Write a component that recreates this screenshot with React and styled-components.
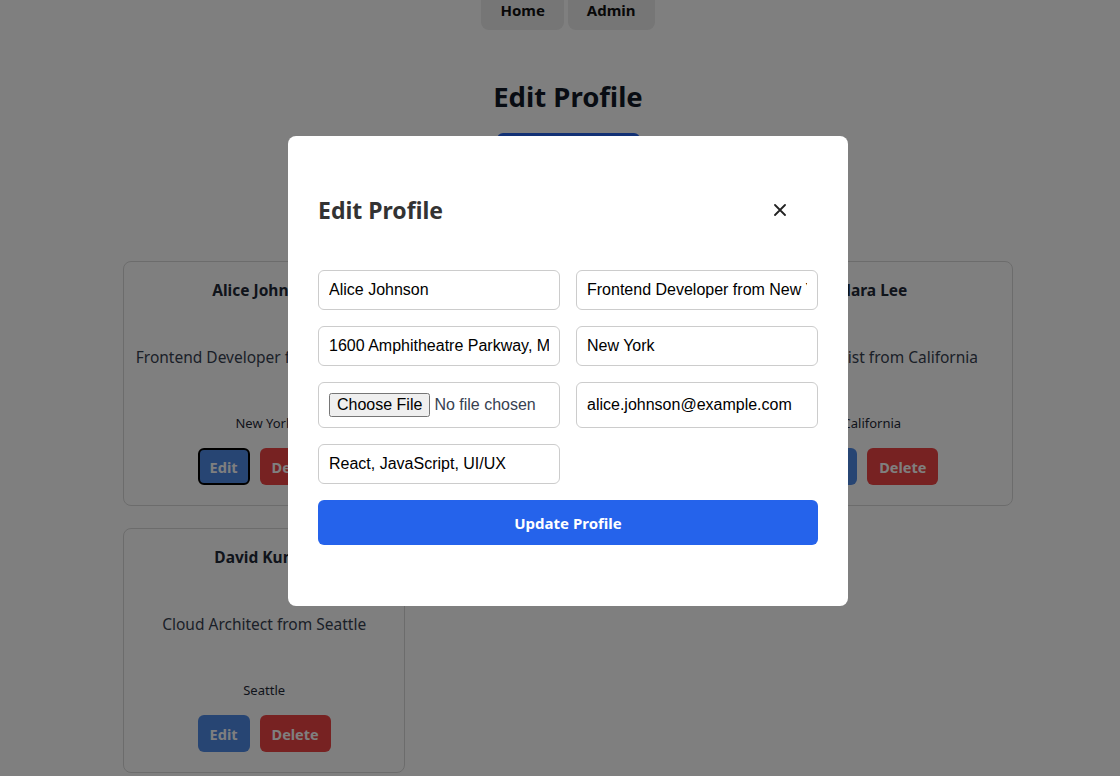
import React from "react";
import styled, { createGlobalStyle } from "styled-components";

const GlobalStyle = createGlobalStyle`
  * {
    box-sizing: border-box;
  }
  body {
    margin: 0;
    background: #ffffff;
    font-family: "Noto Sans", "Open Sans", sans-serif;
    color: #1f2937;
  }
`;

const profiles = [
  {
    name: "Alice Johnson",
    about: "Frontend Developer from New York",
    location: "New York",
    focused: true,
  },
  {
    name: "Bob Smith",
    about: "Backend Engineer from Texas",
    location: "Texas",
  },
  {
    name: "Clara Lee",
    about: "Data Scientist from California",
    location: "California",
  },
  {
    name: "David Kumar",
    about: "Cloud Architect from Seattle",
    location: "Seattle",
  },
];

function App() {
  return (
    <>
      <GlobalStyle />
      <Page>
        <Nav>
          <NavButton>Home</NavButton>
          <NavButton>Admin</NavButton>
        </Nav>
        <Title>Edit Profile</Title>
        <AddButton>Add Profile</AddButton>
        <CardGrid>
          {profiles.map((p) => (
            <Card key={p.name}>
              <Name>{p.name}</Name>
              <About>{p.about}</About>
              <Location>{p.location}</Location>
              <Actions>
                <ActionButton $kind="edit" $focused={p.focused}>
                  Edit
                </ActionButton>
                <ActionButton $kind="delete">Delete</ActionButton>
              </Actions>
            </Card>
          ))}
        </CardGrid>
      </Page>

      <Overlay>
        <Modal>
          <ModalHeader>
            <ModalTitle>Edit Profile</ModalTitle>
            <CloseButton aria-label="Close">
              <svg width="12" height="12" viewBox="0 0 12 12">
                <path
                  d="M1 1 L11 11 M11 1 L1 11"
                  stroke="#222"
                  strokeWidth="1.8"
                  strokeLinecap="round"
                />
              </svg>
            </CloseButton>
          </ModalHeader>
          <Form>
            <Input defaultValue="Alice Johnson" />
            <Input defaultValue="Frontend Developer from New York" />
            <Input defaultValue="1600 Amphitheatre Parkway, Mountain View, CA" />
            <Input defaultValue="New York" />
            <Input type="file" $muted />
            <Input defaultValue="alice.johnson@example.com" />
            <Input defaultValue="React, JavaScript, UI/UX" />
            <Spacer />
            <SubmitButton>Update Profile</SubmitButton>
          </Form>
        </Modal>
      </Overlay>
    </>
  );
}

const Page = styled.div`
  min-height: 100vh;
  padding-left: 16px;
  display: flex;
  flex-direction: column;
  align-items: center;
`;

const Nav = styled.nav`
  display: flex;
  gap: 4px;
`;

const NavButton = styled.button`
  border: none;
  background: #ececec;
  border-radius: 0 0 8px 8px;
  padding: 0 19px 10px;
  font-family: "Noto Sans", sans-serif;
  font-size: 15px;
  font-weight: 700;
  color: #111111;
  line-height: 20px;
`;

const Title = styled.h1`
  margin: 47px 0 0;
  font-size: 27.5px;
  line-height: 40px;
  font-weight: 700;
  color: #111827;
`;

const AddButton = styled.button`
  margin-top: 16px;
  width: 143px;
  height: 40px;
  border: none;
  border-radius: 6px;
  background: #2563eb;
  color: #ffffff;
  font-family: "Noto Sans", sans-serif;
  font-size: 16px;
  font-weight: 700;
`;

const CardGrid = styled.div`
  margin-top: 88px;
  width: 890px;
  display: grid;
  grid-template-columns: repeat(3, 1fr);
  gap: 22px 21.5px;
`;

const Card = styled.div`
  height: 245px;
  border: 1px solid #d9d9d9;
  border-radius: 8px;
  padding: 17px 10px 20px;
  display: flex;
  flex-direction: column;
  align-items: center;
  text-align: center;
`;

const Name = styled.h3`
  margin: 0;
  font-size: 15.5px;
  line-height: 22px;
  font-weight: 700;
  color: #1f2937;
`;

const About = styled.p`
  margin: 44px 0 0;
  font-size: 15.5px;
  line-height: 24px;
  white-space: nowrap;
  color: #374151;
`;

const Location = styled.p`
  margin: 45px 0 0;
  font-size: 13px;
  line-height: 18px;
  color: #1f2937;
`;

const Actions = styled.div`
  margin-top: 16px;
  display: flex;
  gap: 10px;
`;

const ActionButton = styled.button`
  height: 37px;
  padding: 0 10px;
  border-radius: 6px;
  border: 2px solid ${(p) => (p.$focused ? "#000000" : "transparent")};
  background: ${(p) => (p.$kind === "delete" ? "#ef4444" : "#4f8ae6")};
  color: #ffffff;
  font-family: "Noto Sans", sans-serif;
  font-size: 14.5px;
  font-weight: 700;
`;

const Overlay = styled.div`
  position: fixed;
  inset: 0;
  background: rgba(0, 0, 0, 0.5);
  display: flex;
  align-items: center;
  justify-content: center;
  padding: 0 0 34px 16px;
`;

const Modal = styled.div`
  width: 560px;
  background: #ffffff;
  border-radius: 8px;
  padding: 30px;
`;

const ModalHeader = styled.div`
  height: 88px;
  display: flex;
  align-items: center;
  justify-content: space-between;
`;

const ModalTitle = styled.h2`
  margin: 0;
  font-size: 23px;
  font-weight: 700;
  color: #333333;
`;

const CloseButton = styled.button`
  width: 40px;
  height: 40px;
  margin-right: 18px;
  border: none;
  background: transparent;
  display: flex;
  align-items: center;
  justify-content: center;
  padding: 0;
`;

const Form = styled.form`
  margin-top: 16px;
  margin-bottom: 31px;
  display: grid;
  grid-template-columns: 1fr 1fr;
  gap: 16px;
`;

const Input = styled.input`
  width: 100%;
  padding: 10px;
  border: 1px solid #cccccc;
  border-radius: 6px;
  font-family: "Liberation Sans", Arial, sans-serif;
  font-size: 16px;
  color: ${(p) => (p.$muted ? "#374151" : "#000000")};
  outline: none;
`;

const Spacer = styled.div``;

const SubmitButton = styled.button`
  grid-column: span 2;
  height: 45px;
  border: none;
  border-radius: 6px;
  background: #2563eb;
  color: #ffffff;
  font-family: "Noto Sans", sans-serif;
  font-size: 15px;
  font-weight: 700;
`;

export default App;
